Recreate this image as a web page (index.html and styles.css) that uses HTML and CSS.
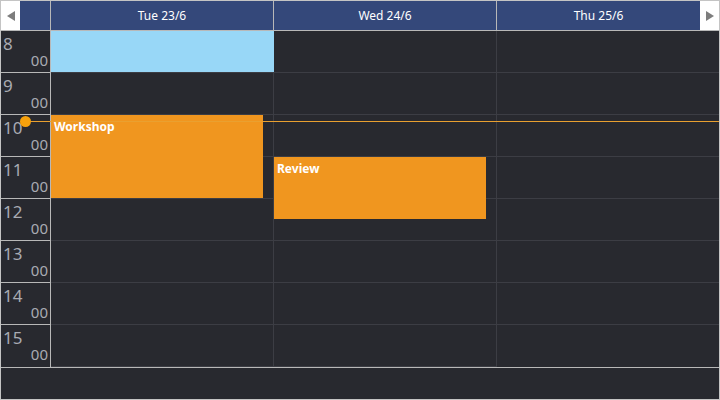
FILE: index.html
```html
<!DOCTYPE html>
<html lang="en">
<head>
  <meta charset="UTF-8">
  <title>Scheduler</title>
  <link rel="stylesheet" href="styles.css">
</head>
<body>
  <div class="scheduler">
    <div class="head">
      <div class="nav">
        <svg width="8" height="10" viewBox="0 0 8 10"><polygon points="8,0 8,10 0,5" fill="#7d7d7d"/></svg>
      </div>
      <div class="corner"></div>
      <div class="day-name">Tue 23/6</div>
      <div class="day-name">Wed 24/6</div>
      <div class="day-name last">Thu 25/6</div>
      <div class="nav">
        <svg width="8" height="10" viewBox="0 0 8 10"><polygon points="0,0 0,10 8,5" fill="#7d7d7d"/></svg>
      </div>
    </div>
    <div class="body">
      <div class="times">
        <div class="slot"><span class="hour">8</span><span class="min">00</span></div>
        <div class="slot"><span class="hour">9</span><span class="min">00</span></div>
        <div class="slot"><span class="hour">10</span><span class="min">00</span></div>
        <div class="slot"><span class="hour">11</span><span class="min">00</span></div>
        <div class="slot"><span class="hour">12</span><span class="min">00</span></div>
        <div class="slot"><span class="hour">13</span><span class="min">00</span></div>
        <div class="slot"><span class="hour">14</span><span class="min">00</span></div>
        <div class="slot"><span class="hour">15</span><span class="min">00</span></div>
      </div>
      <div class="col">
        <div class="cell"></div><div class="cell"></div><div class="cell"></div><div class="cell"></div>
        <div class="cell"></div><div class="cell"></div><div class="cell"></div><div class="cell"></div>
        <div class="event all-day"></div>
        <div class="event workshop">Workshop</div>
      </div>
      <div class="col">
        <div class="cell"></div><div class="cell"></div><div class="cell"></div><div class="cell"></div>
        <div class="cell"></div><div class="cell"></div><div class="cell"></div><div class="cell"></div>
        <div class="event review">Review</div>
      </div>
      <div class="col last">
        <div class="cell"></div><div class="cell"></div><div class="cell"></div><div class="cell"></div>
        <div class="cell"></div><div class="cell"></div><div class="cell"></div><div class="cell"></div>
      </div>
      <div class="now-line"></div>
      <div class="now-dot"></div>
    </div>
    <div class="foot"></div>
  </div>
</body>
</html>
```

FILE: styles.css
```css
* {
  margin: 0;
  padding: 0;
  box-sizing: border-box;
}
body {
  background: #fff;
  font-family: "Noto Sans", "Open Sans", sans-serif;
}

.scheduler {
  width: 720px;
  height: 400px;
  border: 1px solid #c4c4c4;
  background: #28292f;
}

.head {
  display: flex;
  height: 30px;
  border-bottom: 1px solid #b8b8b8;
}
.nav {
  width: 19px;
  background: #fff;
  display: flex;
  align-items: center;
  justify-content: center;
}
.corner {
  width: 31px;
  background: #34487a;
  border-right: 1px solid #b8b8b8;
}
.day-name {
  width: 223px;
  background: #34487a;
  border-right: 1px solid #b8b8b8;
  color: #fff;
  font-size: 12px;
  line-height: 29px;
  text-align: center;
}
.day-name.last {
  width: 203px;
  border-right: none;
}

.body {
  display: flex;
  position: relative;
  border-bottom: 1px solid #b8b8b8;
}
.times {
  width: 50px;
  border-right: 1px solid #b8b8b8;
}
.slot {
  height: 42px;
  border-bottom: 1px solid #b8b8b8;
  position: relative;
  color: #a9abb3;
}
.slot:last-child, .cell:last-child {
  border-bottom: none;
  height: 41px;
}
.hour {
  display: block;
  font-size: 17px;
  line-height: 17px;
  padding: 4px 0 0 2px;
}
.min {
  display: block;
  font-size: 15px;
  line-height: 15px;
  text-align: right;
  padding: 1px 2px 0 0;
}

.col {
  width: 223px;
  border-right: 1px solid #3c3d44;
  position: relative;
}
.col.last {
  width: 222px;
  border-right: none;
}
.cell {
  height: 42px;
  border-bottom: 1px solid #3c3d44;
}

.event {
  position: absolute;
  left: 0;
  color: #fff;
  font-size: 12px;
  font-weight: bold;
  padding: 4px 3px;
  line-height: 16px;
}
.all-day {
  top: 0;
  width: 223px;
  height: 41px;
  background: #98d7f7;
}
.workshop {
  top: 84px;
  width: 212px;
  height: 83px;
  background: #f0961f;
}
.review {
  top: 126px;
  width: 212px;
  height: 62px;
  background: #f0961f;
}

.now-line {
  position: absolute;
  left: 24px;
  right: 0;
  top: 90px;
  height: 1px;
  background: #e9a030;
}
.now-dot {
  position: absolute;
  left: 19px;
  top: 85px;
  width: 11px;
  height: 11px;
  border-radius: 50%;
  background: #f6a10c;
}

.foot {
  height: 31px;
}
```
